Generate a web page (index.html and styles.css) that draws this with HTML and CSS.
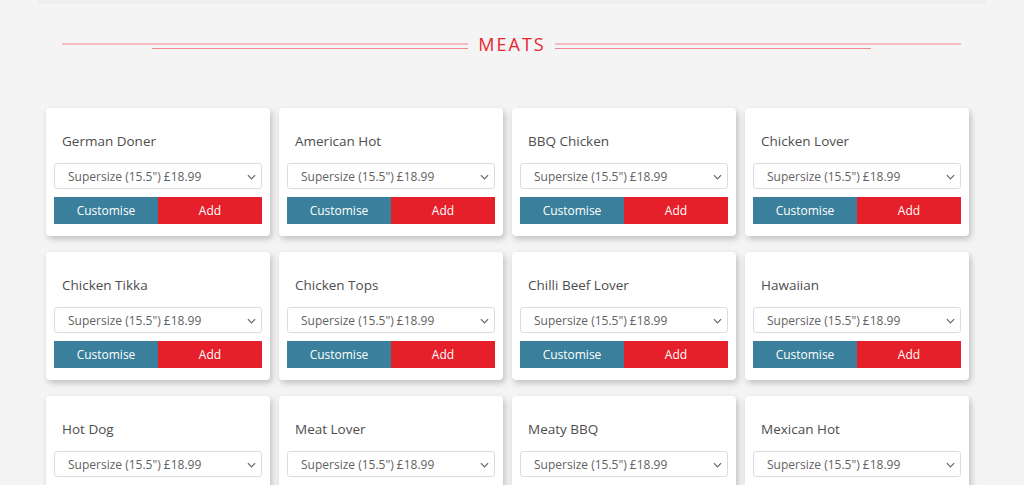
FILE: index.html
```html
<!DOCTYPE html>
<html>
<head>
<meta charset="utf-8">
<link rel="stylesheet" href="styles.css">
</head>
<body>
<div class="topbar"></div>
<section class="category">
  <div class="heading">
    <div class="rule rule-left"><span class="line-a"></span><span class="line-b"></span></div>
    <h2 class="heading-text">MEATS</h2>
    <div class="rule rule-right"><span class="line-a"></span><span class="line-b"></span></div>
  </div>
  <div class="grid">
    <div class="card"><div class="title">German Doner</div><div class="select">Supersize (15.5") £18.99<svg class="chev" viewBox="0 0 10 6" width="9" height="6"><path d="M1 1l4 4 4-4" fill="none" stroke="#666" stroke-width="1.3"/></svg></div><div class="btns"><button class="btn cust">Customise</button><button class="btn add">Add</button></div></div>
    <div class="card"><div class="title">American Hot</div><div class="select">Supersize (15.5") £18.99<svg class="chev" viewBox="0 0 10 6" width="9" height="6"><path d="M1 1l4 4 4-4" fill="none" stroke="#666" stroke-width="1.3"/></svg></div><div class="btns"><button class="btn cust">Customise</button><button class="btn add">Add</button></div></div>
    <div class="card"><div class="title">BBQ Chicken</div><div class="select">Supersize (15.5") £18.99<svg class="chev" viewBox="0 0 10 6" width="9" height="6"><path d="M1 1l4 4 4-4" fill="none" stroke="#666" stroke-width="1.3"/></svg></div><div class="btns"><button class="btn cust">Customise</button><button class="btn add">Add</button></div></div>
    <div class="card"><div class="title">Chicken Lover</div><div class="select">Supersize (15.5") £18.99<svg class="chev" viewBox="0 0 10 6" width="9" height="6"><path d="M1 1l4 4 4-4" fill="none" stroke="#666" stroke-width="1.3"/></svg></div><div class="btns"><button class="btn cust">Customise</button><button class="btn add">Add</button></div></div>
    <div class="card"><div class="title">Chicken Tikka</div><div class="select">Supersize (15.5") £18.99<svg class="chev" viewBox="0 0 10 6" width="9" height="6"><path d="M1 1l4 4 4-4" fill="none" stroke="#666" stroke-width="1.3"/></svg></div><div class="btns"><button class="btn cust">Customise</button><button class="btn add">Add</button></div></div>
    <div class="card"><div class="title">Chicken Tops</div><div class="select">Supersize (15.5") £18.99<svg class="chev" viewBox="0 0 10 6" width="9" height="6"><path d="M1 1l4 4 4-4" fill="none" stroke="#666" stroke-width="1.3"/></svg></div><div class="btns"><button class="btn cust">Customise</button><button class="btn add">Add</button></div></div>
    <div class="card"><div class="title">Chilli Beef Lover</div><div class="select">Supersize (15.5") £18.99<svg class="chev" viewBox="0 0 10 6" width="9" height="6"><path d="M1 1l4 4 4-4" fill="none" stroke="#666" stroke-width="1.3"/></svg></div><div class="btns"><button class="btn cust">Customise</button><button class="btn add">Add</button></div></div>
    <div class="card"><div class="title">Hawaiian</div><div class="select">Supersize (15.5") £18.99<svg class="chev" viewBox="0 0 10 6" width="9" height="6"><path d="M1 1l4 4 4-4" fill="none" stroke="#666" stroke-width="1.3"/></svg></div><div class="btns"><button class="btn cust">Customise</button><button class="btn add">Add</button></div></div>
    <div class="card"><div class="title">Hot Dog</div><div class="select">Supersize (15.5") £18.99<svg class="chev" viewBox="0 0 10 6" width="9" height="6"><path d="M1 1l4 4 4-4" fill="none" stroke="#666" stroke-width="1.3"/></svg></div><div class="btns"><button class="btn cust">Customise</button><button class="btn add">Add</button></div></div>
    <div class="card"><div class="title">Meat Lover</div><div class="select">Supersize (15.5") £18.99<svg class="chev" viewBox="0 0 10 6" width="9" height="6"><path d="M1 1l4 4 4-4" fill="none" stroke="#666" stroke-width="1.3"/></svg></div><div class="btns"><button class="btn cust">Customise</button><button class="btn add">Add</button></div></div>
    <div class="card"><div class="title">Meaty BBQ</div><div class="select">Supersize (15.5") £18.99<svg class="chev" viewBox="0 0 10 6" width="9" height="6"><path d="M1 1l4 4 4-4" fill="none" stroke="#666" stroke-width="1.3"/></svg></div><div class="btns"><button class="btn cust">Customise</button><button class="btn add">Add</button></div></div>
    <div class="card"><div class="title">Mexican Hot</div><div class="select">Supersize (15.5") £18.99<svg class="chev" viewBox="0 0 10 6" width="9" height="6"><path d="M1 1l4 4 4-4" fill="none" stroke="#666" stroke-width="1.3"/></svg></div><div class="btns"><button class="btn cust">Customise</button><button class="btn add">Add</button></div></div>
  </div>
</section>
</body>
</html>
```
FILE: styles.css
```css
html, body {
  margin: 0;
  padding: 0;
  background: #f4f4f4;
  font-family: "Open Sans", "Noto Sans", sans-serif;
  overflow: hidden;
}
.topbar {
  margin: 0 38px;
  height: 4px;
  background: #efefef;
}
.category {
  padding-top: 30px;
}
.heading {
  display: flex;
  align-items: center;
  margin: 0 63px 0 62px;
  height: 20px;
}
.rule {
  flex: 1;
  display: flex;
  flex-direction: column;
  gap: 3px;
  padding-top: 4px;
}
.line-a {
  display: block;
  height: 2px;
  background: #f5bdbd;
}
.line-b {
  display: block;
  height: 1px;
  background: #f08a8c;
}
.rule-left .line-b { margin-left: 90px; }
.rule-right .line-b { margin-right: 90px; }
.heading-text {
  margin: 0 9px 0 10px;
  font-size: 18px;
  font-weight: 400;
  letter-spacing: 2px;
  color: #e8262e;
  line-height: 20px;
}
.grid {
  display: grid;
  grid-template-columns: repeat(4, 224px);
  column-gap: 9px;
  row-gap: 16px;
  margin-top: 54px;
  padding-left: 46px;
}
.card {
  background: #fff;
  border-radius: 4px;
  padding: 8px 8px 12px;
  box-shadow: 2px 3px 6px rgba(0, 0, 0, 0.22);
}
.title {
  padding: 15px 8px 0;
  font-size: 13.5px;
  line-height: 20px;
  color: #4d4d4d;
}
.select {
  position: relative;
  margin-top: 12px;
  height: 26px;
  box-sizing: border-box;
  border: 1px solid #dcdcdc;
  border-radius: 3px;
  padding: 1px 0 0 13px;
  font-size: 12px;
  line-height: 24px;
  color: #626262;
}
.chev {
  position: absolute;
  right: 5px;
  top: 10px;
}
.btns {
  display: flex;
  margin-top: 8px;
  height: 27px;
}
.btn {
  flex: 1;
  border: 0;
  margin: 0;
  padding: 0;
  font-family: "Open Sans", "Noto Sans", sans-serif;
  font-size: 12px;
  color: #fff;
}
.cust { background: #3a7f9b; }
.add { background: #e5202a; }
```
